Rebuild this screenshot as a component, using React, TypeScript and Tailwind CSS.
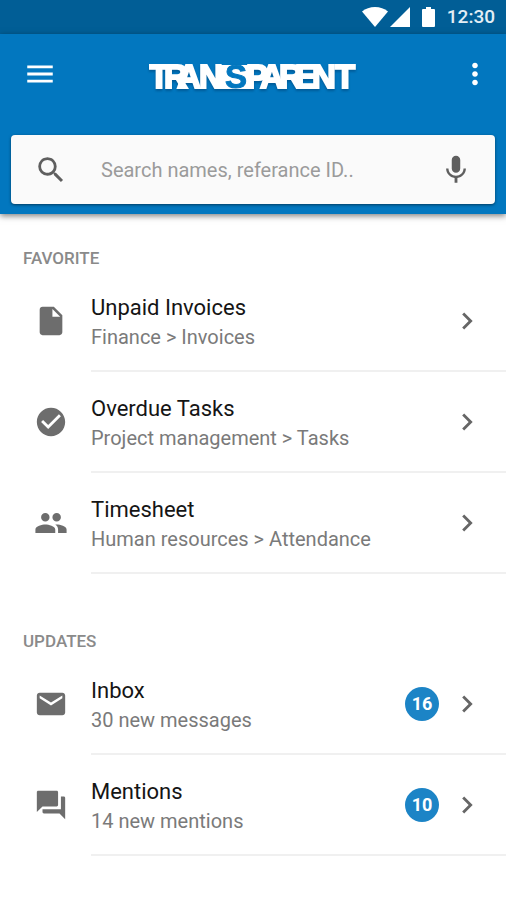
import type { ReactNode } from "react";
import {
  MdCheckCircle,
  MdChevronRight,
  MdEmail,
  MdForum,
  MdInsertDriveFile,
  MdMenu,
  MdMic,
  MdMoreVert,
  MdPeople,
  MdSearch,
} from "react-icons/md";

type Item = {
  title: string;
  detail: string;
  icon: ReactNode;
  count?: number;
};

const favorites: Item[] = [
  { title: "Unpaid Invoices", detail: "Finance > Invoices", icon: <MdInsertDriveFile size={34} /> },
  { title: "Overdue Tasks", detail: "Project management > Tasks", icon: <MdCheckCircle size={34} /> },
  { title: "Timesheet", detail: "Human resources > Attendance", icon: <MdPeople size={34} /> },
];

const updates: Item[] = [
  { title: "Inbox", detail: "30 new messages", icon: <MdEmail size={34} />, count: 16 },
  { title: "Mentions", detail: "14 new mentions", icon: <MdForum size={34} />, count: 10 },
];

function StatusBar() {
  return (
    <div className="flex h-[34px] items-center justify-end bg-[#015e96] pr-[11px] text-white">
      <svg width="74" height="20" viewBox="0 0 74 20" fill="currentColor" aria-hidden="true">
        <path d="M13 20 0 4.500C3.500 1.600 8 0 13 0s9.500 1.600 13 4.500z" />
        <path d="M28 20 48 0v20z" />
        <path d="M61 2h3V0h5v2h3q1 0 1 1v16q0 1-1 1H61q-1 0-1-1V3q0-1 1-1z" />
      </svg>
      <span className="ml-[11px] text-[19px] leading-6 font-medium text-[#e3eef5]">12:30</span>
    </div>
  );
}

function Logo() {
  return (
    <svg
      width="208"
      height="50"
      viewBox="0 0 208 50"
      role="img"
      aria-label="Transparent"
      className="drop-shadow-[0_2px_1px_rgba(0,40,80,0.35)]"
    >
      <path d="M70 14h32v24H70z" fill="#ffffff" />
      <g
        fontFamily="'Liberation Sans', Arial, sans-serif"
        fontWeight="700"
        fontSize="33"
        fill="#ffffff"
        stroke="#ffffff"
        strokeWidth="2"
      >
        <text y="37" x="0 15 28 50">TRAN</text>
        <text y="37" x="97 111 130 146 163 186">PARENT</text>
        <text y="37" x="76" fill="#0277bf" stroke="#0277bf" strokeWidth="1">S</text>
      </g>
    </svg>
  );
}

function Row({ item }: { item: Item }) {
  return (
    <li>
      <button type="button" className="flex h-[101px] w-full items-stretch pl-[34px] text-left">
        <span className="flex w-[57px] shrink-0 items-center pb-0.5 text-[#6d6d6d]">{item.icon}</span>
        <span className="flex min-w-0 flex-1 items-center border-b-2 border-[#f0f0f0] pr-[22px]">
          <span className="flex min-w-0 flex-1 flex-col pt-[3px]">
            <span className="text-[22px] leading-[30px] text-[#151515]">{item.title}</span>
            <span className="text-[20px] leading-7 text-[#7a7a7a]">{item.detail}</span>
          </span>
          {item.count !== undefined && (
            <span className="mr-[11px] flex size-[34px] items-center justify-center rounded-full bg-[#1c84c6] text-[18px] font-bold text-white">
              {item.count}
            </span>
          )}
          <MdChevronRight size={34} className="shrink-0 text-[#666666]" />
        </span>
      </button>
    </li>
  );
}

function Section({ title, items, className }: { title: string; items: Item[]; className: string }) {
  return (
    <section className={className}>
      <h2 className="pb-px pl-[23px] text-[17px] leading-6 font-medium text-[#8a8a8a]">{title}</h2>
      <ul>
        {items.map((item) => (
          <Row key={item.title} item={item} />
        ))}
      </ul>
    </section>
  );
}

export default function App() {
  return (
    <div className="min-h-screen bg-white font-['Roboto',sans-serif]">
      <StatusBar />
      <header className="bg-[#0277bf] pb-[10px] shadow-[0_2px_6px_rgba(0,0,0,0.5)]">
        <div className="flex h-20 items-center pr-[14px] pl-[23px] text-white">
          <button type="button" aria-label="Open menu">
            <MdMenu size={34} />
          </button>
          <h1 className="flex flex-1 justify-center pt-1 pr-[9px]">
            <Logo />
          </h1>
          <button type="button" aria-label="More options">
            <MdMoreVert size={34} />
          </button>
        </div>
        <form
          role="search"
          className="mx-[11px] mt-[21px] flex h-[69px] items-center rounded-[4px] bg-[#fafafa] pr-[22px] pl-[23px] text-[#5f5f5f] shadow-[0_1px_3px_rgba(0,0,0,0.5)]"
        >
          <MdSearch size={34} className="shrink-0" />
          <input
            type="search"
            aria-label="Search names or reference ID"
            placeholder="Search names, referance ID.."
            className="ml-[33px] min-w-0 flex-1 bg-transparent text-[20px] leading-7 outline-none placeholder:text-[#9b9b9b]"
          />
          <button type="button" aria-label="Voice search">
            <MdMic size={34} />
          </button>
        </form>
      </header>
      <main>
        <Section title="FAVORITE" items={favorites} className="pt-8" />
        <Section title="UPDATES" items={updates} className="pt-[55px]" />
      </main>
    </div>
  );
}
